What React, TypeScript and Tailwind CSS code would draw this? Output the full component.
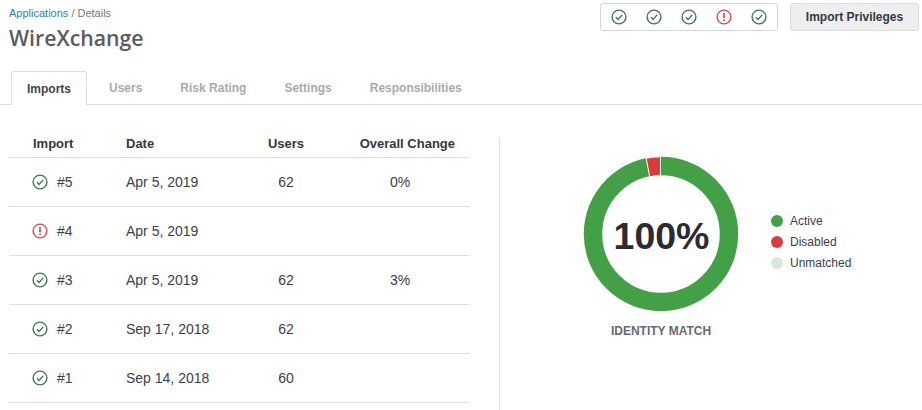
const tabs = ["Users", "Risk Rating", "Settings", "Responsibilities"];

const rows = [
  { ok: true, id: "#5", date: "Apr 5, 2019", users: "62", change: "0%" },
  { ok: false, id: "#4", date: "Apr 5, 2019", users: "", change: "" },
  { ok: true, id: "#3", date: "Apr 5, 2019", users: "62", change: "3%" },
  { ok: true, id: "#2", date: "Sep 17, 2018", users: "62", change: "" },
  { ok: true, id: "#1", date: "Sep 14, 2018", users: "60", change: "" },
];

const legend = [
  { label: "Active", color: "bg-[#43a047]" },
  { label: "Disabled", color: "bg-[#db3b3b]" },
  { label: "Unmatched", color: "bg-[#d5ead6]" },
];

function StatusIcon({ ok }: { ok: boolean }) {
  if (ok) {
    return (
      <svg width="16" height="16" viewBox="0 0 16 16" fill="none" className="shrink-0">
        <circle cx="8" cy="8" r="6.9" stroke="#3f7550" strokeWidth="1.4" />
        <path d="M4.9 8.2 7.1 10.4 11.2 5.9" stroke="#3f7550" strokeWidth="1.4" />
      </svg>
    );
  }
  return (
    <svg width="16" height="16" viewBox="0 0 16 16" fill="none" className="shrink-0">
      <circle cx="8" cy="8" r="6.9" stroke="#d9484f" strokeWidth="1.4" />
      <path d="M8 3.9V9.2" stroke="#d9484f" strokeWidth="1.7" />
      <path d="M8 10.6V12.2" stroke="#d9484f" strokeWidth="1.7" />
    </svg>
  );
}

function Donut() {
  return (
    <div className="relative w-[156px] h-[156px]">
      <svg width="156" height="156" viewBox="0 0 156 156">
        <circle cx="78" cy="78" r="68" fill="none" stroke="#43a047" strokeWidth="18.5" />
        <path
          d="M77.5 0.8 A77.25 77.25 0 0 0 63.2 2.2 L66.7 20.9 A59 59 0 0 1 77.5 19 Z"
          fill="#db3b3b"
          stroke="#ffffff"
          strokeWidth="1"
        />
      </svg>
      <div className="absolute inset-0 flex items-center justify-center pt-[5px] pl-[1px] text-[37.5px] font-bold text-[#2b2b33]">
        100%
      </div>
    </div>
  );
}

export default function App() {
  return (
    <div className="w-[922px] h-[410px] overflow-hidden bg-white font-['Liberation_Sans',Arial,sans-serif] text-[#333842]">
      <div className="flex justify-between h-[71px]">
        <div className="pl-[9px] pt-[6px]">
          <div className="text-[11px] leading-[15px] text-[#777]">
            <span className="text-[#337ab7]">Applications</span> / Details
          </div>
          <h1 className="mt-[2px] font-['Open_Sans',sans-serif] text-[21.25px] leading-[30px] font-semibold text-[#5b5b5f]">
            WireXchange
          </h1>
        </div>
        <div className="flex items-start pt-[3px] pr-[3px] gap-[12px]">
          <div className="flex items-center gap-[19px] h-[28px] px-[10px] border border-[#d6d6d6] rounded-[3px]">
            <StatusIcon ok />
            <StatusIcon ok />
            <StatusIcon ok />
            <StatusIcon ok={false} />
            <StatusIcon ok />
          </div>
          <button className="w-[129px] h-[28px] bg-[#eeeeee] border border-[#dcdcdc] rounded-[3px] text-[12px] font-bold text-[#333842]">
            Import Privileges
          </button>
        </div>
      </div>

      <div className="flex items-end h-[34px] pl-[11px] border-b border-[#dddddd]">
        <div className="flex items-center justify-center w-[76px] h-[34px] -mb-px bg-white border border-b-0 border-[#dddddd] rounded-t-[3px] text-[12px] font-bold text-[#444]">
          Imports
        </div>
        <div className="flex items-center h-[33px] pl-[22px] gap-[38px] text-[12px] font-bold text-[#aaaaaa]">
          {tabs.map((tab) => (
            <span key={tab}>{tab}</span>
          ))}
        </div>
      </div>

      <div className="flex pt-[25px] pl-[9px]">
        <div className="w-[461px]">
          <div className="grid grid-cols-[117px_112px_96px_136px] h-[28px] items-center border-b border-[#dddddd] text-[13px] font-bold text-[#333842]">
            <span className="pl-[24px]">Import</span>
            <span>Date</span>
            <span className="text-center">Users</span>
            <span className="text-right pr-[15px]">Overall Change</span>
          </div>
          {rows.map((row) => (
            <div
              key={row.id}
              className="grid grid-cols-[117px_112px_96px_136px] h-[49px] items-center border-b border-[#dddddd] text-[14px] text-[#3a3f48]"
            >
              <span className="flex items-center gap-[9px] pl-[23px]">
                <StatusIcon ok={row.ok} />
                {row.id}
              </span>
              <span>{row.date}</span>
              <span className="text-center">{row.users}</span>
              <span className="text-center pr-[4px]">{row.change}</span>
            </div>
          ))}
        </div>

        <div className="ml-[29px] mt-[7px] w-px h-[300px] bg-[#dddddd]" />

        <div className="flex flex-col pl-[83px] pt-[26px]">
          <div className="flex items-center">
            <Donut />
            <div className="flex flex-col gap-[7px] ml-[32px] mt-[16px] text-[12px] text-[#3a3f48]">
              {legend.map((item) => (
                <div key={item.label} className="flex items-center gap-[7px] h-[14px]">
                  <span className={`w-[12px] h-[12px] rounded-full ${item.color}`} />
                  {item.label}
                </div>
              ))}
            </div>
          </div>
          <div className="w-[156px] mt-[10px] text-center text-[12px] font-bold text-[#666a70]">
            IDENTITY MATCH
          </div>
        </div>
      </div>
    </div>
  );
}
